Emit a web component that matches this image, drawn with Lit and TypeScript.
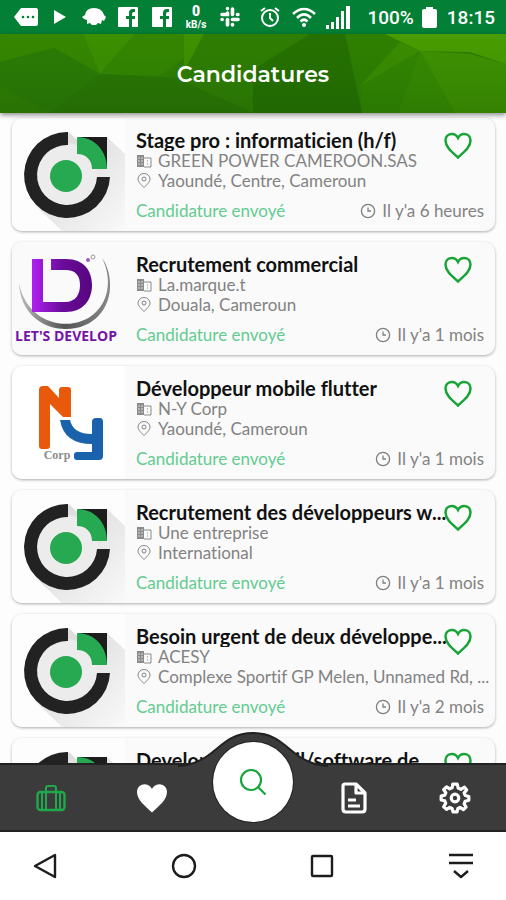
import { LitElement, html, css, svg } from "lit";
import { customElement, property } from "lit/decorators.js";

interface Job {
  logo: "orbit" | "develop" | "ny";
  title: string;
  company: string;
  place: string;
  age: string;
}

const JOBS: Job[] = [
  { logo: "orbit", title: "Stage pro : informaticien (h/f)", company: "GREEN POWER CAMEROON.SAS", place: "Yaoundé, Centre, Cameroun", age: "Il y'a 6 heures" },
  { logo: "develop", title: "Recrutement commercial", company: "La.marque.t", place: "Douala, Cameroun", age: "Il y'a 1 mois" },
  { logo: "ny", title: "Développeur mobile flutter", company: "N-Y Corp", place: "Yaoundé, Cameroun", age: "Il y'a 1 mois" },
  { logo: "orbit", title: "Recrutement des développeurs w...", company: "Une entreprise", place: "International", age: "Il y'a 1 mois" },
  { logo: "orbit", title: "Besoin urgent de deux développe...", company: "ACESY", place: "Complexe Sportif GP Melen, Unnamed Rd, ...", age: "Il y'a 2 mois" },
  { logo: "orbit", title: "Developpeur mobil/software de...", company: "Une entreprise", place: "International", age: "Il y'a 2 mois" },
];

const orbitLogo = html`<svg viewBox="0 0 113 113" aria-hidden="true">
  <defs>
    <linearGradient id="shade" x1="0" y1="0" x2="1" y2="1">
      <stop offset="0.3" stop-color="#dedede" /><stop offset="1" stop-color="#f9f9f9" />
    </linearGradient>
  </defs>
  <rect width="113" height="113" fill="#fdfdfd" />
  <path d="M57 14 L65 22 L95 19 L113 36 V113 H50 L24 88 Z" fill="url(#shade)" />
  <circle cx="54" cy="57" r="32" fill="#ececec" />
  <path d="M56 14 A43 43 0 1 0 98 59 H85 A30 30 0 1 1 56 27 Z" fill="#222" />
  <circle cx="54" cy="58" r="16" fill="#27a952" />
  <path d="M66 19 H95 V51 Z" fill="#1d1d1d" />
  <path d="M65 19 C83 19 95 33 95 51 H80 C80 42 74 36 65 36 Z" fill="#27a952" />
</svg>`;

const developLogo = html`<svg viewBox="0 0 113 113" aria-hidden="true">
  <defs>
    <linearGradient id="violet" x1="0" y1="0" x2="1" y2="0">
      <stop offset="0" stop-color="#b021f0" /><stop offset="0.5" stop-color="#6a0c9a" /><stop offset="1" stop-color="#560580" />
    </linearGradient>
    <linearGradient id="steel" x1="0" y1="0" x2="1" y2="0">
      <stop offset="0" stop-color="#bbb" /><stop offset="0.5" stop-color="#555" /><stop offset="1" stop-color="#888" />
    </linearGradient>
  </defs>
  <rect width="113" height="113" fill="#fafafa" />
  <path d="M7 41 C8 69 28 87 54 87 C82 87 99 66 98 42 C98 32 95 23 90 16 C100 36 97 57 84 70 C62 92 15 84 7 41 Z" fill="url(#steel)" />
  <path d="M20 17 H31 V60 H53 C64 60 68 52 68 43 C68 34 64 28 53 28 H39 V17 H54 C72 17 80 29 80 43 C80 58 71 70 54 70 H20 Z" fill="url(#violet)" />
  <circle cx="76" cy="18" r="2" fill="#a05cc0" /><circle cx="81" cy="15" r="2" fill="none" stroke="#999" />
  <text x="54" y="99" class="develop-word">LET'S DEVELOP</text>
</svg>`;

const nyLogo = html`<svg viewBox="0 0 113 113" aria-hidden="true">
  <rect width="113" height="113" fill="#fff" />
  <path d="M27 24 Q27 20 31 20 H36 L47 32 V24 Q47 21 50 21 H56 Q59 21 59 24 V51 H51 L38 38 V80 Q38 83 35 83 H30 Q27 83 27 80 Z" fill="#e8590c" />
  <path d="M48 54 H58 Q61 68 80 68 V56 Q80 52 84 52 H88 Q91 52 91 56 V90 Q91 94 87 94 H65 Q62 94 62 91 V89 Q62 86 65 86 H80 V78 Q52 78 48 54 Z" fill="#1b62ac" />
  <text x="45" y="93" class="corp-word">Corp</text>
</svg>`;

const LOGOS = { orbit: orbitLogo, develop: developLogo, ny: nyLogo };

const heartPath = svg`<path d="M14 25.500 C8 20 1.500 15 1.500 8.500 C1.500 4.500 4.500 2 8 2 C11 2 13 4 14 6 C15 4 17 2 20 2 C23.500 2 26.500 4.500 26.500 8.500 C26.500 15 20 20 14 25.500 Z" />`;

const facebook = html`<svg width="20" height="20" viewBox="0 0 20 20" aria-hidden="true">
  <path fill="#fff" d="M1 0 H19 Q20 0 20 1 V19 Q20 20 19 20 H14 V12 H17 V9 H14 V7 Q14 5 16 5 H17 V2 H15 Q11 2 11 6 V9 H8 V12 H11 V20 H1 Q0 20 0 19 V1 Q0 0 1 0 Z" />
</svg>`;

@customElement("status-bar")
export class StatusBar extends LitElement {
  static styles = css`
    :host { display: flex; justify-content: space-between; align-items: center; height: 34px; padding: 0 11px 0 9px; background: #037f36; color: #fff; font-family: Roboto, sans-serif; font-weight: 500; font-size: 19px; }
    .group { display: flex; align-items: center; }
    .slot { width: 34px; display: flex; justify-content: center; align-items: center; }
    .rate { flex-direction: column; font-size: 10px; line-height: 12px; font-weight: 700; }
    .rate b { font-size: 14px; line-height: 16px; }
    .level { margin-left: 12px; }
    .battery { margin: 0 10px 0 8px; }
  `;
  render() {
    return html`
      <div class="group">
        <span class="slot"><svg width="24" height="20" viewBox="0 0 24 20"><path fill="#fff" d="M7 1 H22 Q24 1 24 3 V17 Q24 19 22 19 H7 L0 10 Z" /><g fill="#037f36"><circle cx="9" cy="10" r="1.300" /><circle cx="14" cy="10" r="1.300" /><circle cx="19" cy="10" r="1.300" /></g></svg></span>
        <span class="slot"><svg width="12" height="16" viewBox="0 0 12 16"><path fill="#fff" d="M0 1 L12 8 L0 15 Z" /></svg></span>
        <span class="slot"><svg width="24" height="20" viewBox="0 0 24 20"><path fill="#fff" d="M0 10 L3 8 Q4 1 12 1 Q20 1 22 8 L24 10 L22 14 L20 13 L19 17 L16 16 L14 18 H10 L8 16 L5 17 V13 L2 12 Z" /></svg></span>
        <span class="slot">${facebook}</span>
        <span class="slot">${facebook}</span>
        <span class="slot rate"><b>0</b><span>kB/s</span></span>
        <span class="slot"><svg width="22" height="22" viewBox="0 0 22 22" fill="none" stroke="#fff" stroke-width="3.600" stroke-linecap="round"><path d="M8.500 2.500 V2.600 M8.500 7 V8.500 H3 M13.500 3 V8.500 M18.500 8.500 H19 M13.500 13.500 H19 M13.500 18.500 V19 M8.500 13.500 V19 M3 13.500 H3.200" /></svg></span>
      </div>
      <div class="group">
        <span class="slot"><svg width="20" height="20" viewBox="0 0 20 20" fill="none" stroke="#fff" stroke-width="2"><circle cx="10" cy="11" r="8" /><path d="M10 6 V11 L13 14 M1 4 L5 1 M19 4 L15 1" /></svg></span>
        <span class="slot"><svg width="24" height="20" viewBox="0 0 24 20" fill="none" stroke="#fff" stroke-width="2.600"><path d="M1 7 Q12 -3 23 7 M5 11 Q12 4 19 11 M8.500 14.500 Q12 11 15.500 14.500" /><circle cx="12" cy="18" r="2" fill="#fff" stroke="none" /></svg></span>
        <span class="slot"><svg width="24" height="24" viewBox="0 0 24 24" fill="#fff"><path d="M0 20 H3 V24 H0 Z M5 17 H8 V24 H5 Z M10 12 H13 V24 H10 Z M15 6 H18 V24 H15 Z M20 1 H24 V24 H20 Z" /></svg></span>
        <span class="level">100%</span>
        <svg class="battery" width="15" height="21" viewBox="0 0 15 21"><path fill="#fff" d="M4 0 H11 V2 H13 Q15 2 15 4 V19 Q15 21 13 21 H2 Q0 21 0 19 V4 Q0 2 2 2 H4 Z" /></svg>
        <time>18:15</time>
      </div>`;
  }
}

@customElement("job-card")
export class JobCard extends LitElement {
  @property({ attribute: false }) job!: Job;
  static styles = css`
    :host { display: block; }
    .card { display: grid; grid-template-columns: 113px minmax(0, 1fr); border-radius: 10px; overflow: hidden; background: #fafafa; box-shadow: 0 1px 3px rgba(0, 0, 0, 0.32); }
    .logo { height: 113px; }
    .logo svg { display: block; width: 113px; height: 113px; }
    .develop-word { font: 700 14px "Open Sans", sans-serif; fill: #7413a6; text-anchor: middle; }
    .corp-word { font: 700 12px "Liberation Serif", serif; fill: #8c8c8c; text-anchor: middle; }
    .body { padding: 11px 11px 10px 11px; color: #828282; font-size: 17px; line-height: 20px; font-variant-ligatures: none; }
    .head { display: flex; align-items: flex-start; height: 22px; padding-right: 12px; }
    h2 { flex: 1; min-width: 0; margin: 0 -10px 0 0; font-size: 20px; line-height: 22px; font-weight: 700; color: #111; }
    h2, .line span { overflow: hidden; white-space: nowrap; text-overflow: ellipsis; }
    .fav { flex: none; width: 28px; height: 28px; margin-top: 3px; padding: 0; border: 0; background: none; cursor: pointer; }
    .fav svg { display: block; fill: none; stroke: #17a336; stroke-width: 2.500; }
    .line { display: flex; align-items: center; gap: 6px; }
    .line svg { flex: none; }
    .place { margin-right: -8px; }
    .foot { display: flex; justify-content: space-between; margin-top: 10px; }
    .state { color: #62cc90; }
  `;
  render() {
    const j = this.job;
    return html`<article class="card">
      <div class="logo">${LOGOS[j.logo]}</div>
      <div class="body">
        <div class="head">
          <h2>${j.title}</h2>
          <button class="fav" aria-label="Ajouter aux favoris"><svg width="28" height="28" viewBox="0 0 28 28">${heartPath}</svg></button>
        </div>
        <div class="line">
          <svg width="16" height="16" viewBox="0 0 16 16" aria-hidden="true"><path d="M1 2 H8 V14 H1 Z" fill="#8a8a8a" /><path d="M8 5 H15 V14 H8 M11 8 H12 M11 11 H12 M1 5 H8 M1 8 H8 M1 11 H8 M4 2 V14" fill="none" stroke="#8a8a8a" /><path d="M2 5 H7 M2 8 H7 M2 11 H7" stroke="#ddd" stroke-dasharray="2 1" /></svg>
          <span>${j.company}</span>
        </div>
        <div class="line place">
          <svg width="16" height="16" viewBox="0 0 16 16" fill="none" stroke="#858585" aria-hidden="true"><path d="M8 14.500 C4 10.500 2 8.500 2 6 A6 5.500 0 0 1 14 6 C14 8.500 12 10.500 8 14.500 Z" /><circle cx="8" cy="6" r="2" /></svg>
          <span>${j.place}</span>
        </div>
        <div class="foot">
          <span class="state">Candidature envoyé</span>
          <span class="line">
            <svg width="16" height="16" viewBox="0 0 16 16" fill="none" stroke="#808080" stroke-width="1.300" aria-hidden="true"><circle cx="8" cy="8" r="6.600" /><path d="M8 4.500 V8 H11" /></svg>
            <span>${j.age}</span>
          </span>
        </div>
      </div>
    </article>`;
  }
}

@customElement("tab-bar")
export class TabBar extends LitElement {
  static styles = css`
    :host { display: block; position: relative; height: 69px; background: #3b3b3b; box-sizing: border-box; border-top: 2px solid #222; border-bottom: 2px solid #222; }
    nav { display: grid; grid-template-columns: repeat(5, 1fr); height: 100%; }
    a { display: flex; align-items: center; justify-content: center; }
    .bump { position: absolute; left: 50%; bottom: 100%; margin: 0 0 -2px -75px; }
    .search { position: absolute; left: 50%; top: -23px; width: 80px; height: 80px; margin-left: -40px; padding: 0; display: flex; align-items: center; justify-content: center; border: 0; border-radius: 50%; background: #fff; box-shadow: 0 0 0 1px #222; cursor: pointer; }
  `;
  render() {
    return html`
      <svg class="bump" width="150" height="35" viewBox="0 0 150 35" aria-hidden="true">
        <path d="M0 35 V34 C38 32 40 1 75 1 C110 1 112 32 150 34 V35 Z" fill="#3b3b3b" />
        <path d="M0 34 C38 32 40 1 75 1 C110 1 112 32 150 34" fill="none" stroke="#222" stroke-width="2" />
      </svg>
      <nav>
        <a href="#emplois" aria-label="Emplois"><svg width="30" height="28" viewBox="0 0 30 28" fill="none" stroke="#1fa94c" stroke-width="2.400"><rect x="1.500" y="8" width="27" height="18" rx="3" /><path d="M10 26 V4 Q10 2 12 2 H18 Q20 2 20 4 V26 M6 8 V26 M24 8 V26" stroke-width="2" /></svg></a>
        <a href="#favoris" aria-label="Favoris"><svg width="32" height="30" viewBox="1 1 26 25" fill="#fff">${heartPath}</svg></a>
        <span></span>
        <a href="#documents" aria-label="Documents"><svg width="26" height="32" viewBox="0 0 26 32" fill="none" stroke="#fff" stroke-width="3.200" stroke-linejoin="round"><path d="M2 4 Q2 2 4 2 H15 L24 11 V27 Q24 30 21 30 H5 Q2 30 2 27 Z M15 2 V11 H24" /><path d="M7 18 H15 M7 24 H19" stroke-width="3" /></svg></a>
        <a href="#reglages" aria-label="Réglages"><svg width="32" height="32" viewBox="1 1 22 22" fill="none" stroke="#fff" stroke-width="2.200" stroke-linejoin="round"><path d="M10.500 2.500 H13.500 L14.200 5.200 L16 6 L18.500 4.500 L20 6.500 L18.300 8.500 L19 10.300 L21.500 11 V13.500 L19 14.200 L18.300 16 L19.600 18.200 L17.800 20 L15.500 18.500 L14 19.200 L13.400 21.500 H10.600 L10 19.200 L8.300 18.500 L6.200 19.800 L4.200 18 L5.600 15.700 L5 14 L2.500 13.400 V10.700 L5 10 L5.700 8.300 L4.200 6.300 L6.200 4.300 L8.300 5.700 L10 5 Z" /><circle cx="12" cy="12" r="2.600" /></svg></a>
      </nav>
      <button class="search" aria-label="Rechercher"><svg width="28" height="28" viewBox="0 0 28 28" fill="none" stroke="#17a53e" stroke-width="2.200"><circle cx="12" cy="12" r="10" /><path d="M19 19 L26.500 26.500" /></svg></button>`;
  }
}

@customElement("system-bar")
export class SystemBar extends LitElement {
  static styles = css`
    :host { display: flex; justify-content: space-between; align-items: center; height: 68px; padding: 0 23px; background: #fff; }
    button { width: 44px; height: 44px; padding: 0; border: 0; background: none; display: flex; align-items: center; justify-content: center; cursor: pointer; }
    svg { fill: none; stroke: #1c1c1c; stroke-width: 2.400; stroke-linejoin: round; }
  `;
  render() {
    return html`
      <button aria-label="Retour"><svg width="24" height="26" viewBox="0 0 24 26"><path d="M22 2 V24 L2 13 Z" /></svg></button>
      <button aria-label="Accueil"><svg width="26" height="26" viewBox="0 0 26 26"><circle cx="13" cy="13" r="11" /></svg></button>
      <button aria-label="Applications"><svg width="24" height="24" viewBox="0 0 24 24"><rect x="2" y="2" width="20" height="20" rx="1" /></svg></button>
      <button aria-label="Menu"><svg width="26" height="26" viewBox="0 0 26 26"><path d="M1 2 H25 M1 10 H25 M6 18 L13 24 L20 18" /></svg></button>`;
  }
}

@customElement("app-root")
export class AppRoot extends LitElement {
  static styles = css`
    :host { display: flex; flex-direction: column; height: 100vh; overflow: hidden; background: #fdfdfd; font-family: Lato, sans-serif; }
    header { position: relative; z-index: 1; flex: none; display: grid; place-items: center; height: 79px; background: #2f7d02; box-shadow: 0 2px 5px rgba(0, 0, 0, 0.45); }
    header svg { grid-area: 1 / 1; width: 100%; height: 79px; }
    h1 { grid-area: 1 / 1; margin: 0; padding-top: 2px; color: #fff; font: 600 22px/28px Montserrat, Inter, sans-serif; }
    main { flex: 1; min-height: 0; overflow: hidden; display: flex; flex-direction: column; gap: 11px; padding: 5px 11px 0 12px; }
    job-card { flex: none; }
    status-bar, tab-bar, system-bar { flex: none; }
  `;
  render() {
    return html`
      <status-bar></status-bar>
      <header>
        <svg viewBox="0 0 506 79" preserveAspectRatio="none" aria-hidden="true">
          <defs><linearGradient id="fade" x1="0" y1="0" x2="0" y2="1"><stop offset="0" stop-color="#062" stop-opacity="0" /><stop offset="1" stop-color="#031" stop-opacity="0.150" /></linearGradient></defs>
          <rect width="506" height="79" fill="#307d02" />
          <path d="M0 0 H83 L100 40 L54 14 L0 28 Z" fill="#368600" />
          <path d="M83 0 H135 L100 40 Z" fill="#3c8f00" />
          <path d="M135 0 H184 V24 L160 42 L100 40 Z" fill="#358500" />
          <path d="M184 0 H204 L184 38 Z" fill="#409000" />
          <path d="M54 14 L100 40 L50 79 L0 52 V28 Z" fill="#2c7a04" />
          <path d="M100 40 L176 44 L253 79 H50 Z" fill="#2b7503" />
          <path d="M204 0 H310 L253 36 L184 38 Z" fill="#2f7d01" />
          <path d="M310 0 H345 L362 79 H253 V36 Z" fill="#267000" />
          <path d="M345 0 H390 L420 17 L360 52 Z" fill="#2f7f00" />
          <path d="M360 52 L420 17 L398 79 H362 Z" fill="#328400" />
          <path d="M360 52 L400 8 L420 17 Z" fill="#3b8c00" />
          <path d="M420 17 L455 79 H398 Z" fill="#378900" />
          <path d="M420 17 L470 20 L506 30 V79 H455 Z" fill="#3f9000" />
          <path d="M385 0 H506 V30 L470 18 L420 17 Z" fill="#499b00" />
          <rect width="506" height="79" fill="url(#fade)" />
        </svg>
        <h1>Candidatures</h1>
      </header>
      <main>${JOBS.map((j) => html`<job-card .job=${j}></job-card>`)}</main>
      <tab-bar></tab-bar>
      <system-bar></system-bar>`;
  }
}
